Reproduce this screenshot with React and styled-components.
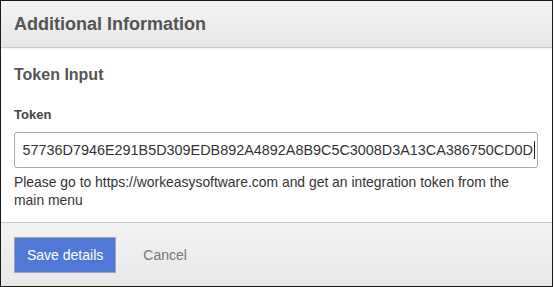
import styled, { createGlobalStyle } from "styled-components";

const GlobalStyle = createGlobalStyle`
  html, body {
    margin: 0;
    padding: 0;
    background: #ffffff;
  }
  body {
    font-family: "Liberation Sans", Arial, sans-serif;
  }
`;

const Modal = styled.div`
  width: 553px;
  height: 287px;
  box-sizing: border-box;
  border: 1px solid #1c1c1c;
  display: flex;
  flex-direction: column;
  background: #ffffff;
`;

const Header = styled.div`
  height: 47px;
  flex-shrink: 0;
  box-sizing: border-box;
  display: flex;
  align-items: center;
  padding: 0 13px;
  background: linear-gradient(#f4f4f4, #e7e7e7);
  border-bottom: 1px solid #c9c9c9;
  box-shadow: 0 1px 2px rgba(0, 0, 0, 0.06);
`;

const Title = styled.h2`
  margin: 0;
  font-size: 18px;
  font-weight: bold;
  color: #555555;
`;

const Body = styled.div`
  flex: 1;
  padding: 18px 13px 0;
  display: flex;
  flex-direction: column;
`;

const Section = styled.h3`
  margin: 0 0 23px;
  font-size: 16px;
  font-weight: bold;
  color: #555555;
  line-height: 18px;
`;

const Label = styled.label`
  font-size: 13px;
  font-weight: bold;
  color: #444444;
  line-height: 16px;
  margin-bottom: 9px;
`;

const Field = styled.div`
  height: 36px;
  width: 524px;
  box-sizing: border-box;
  border: 1px solid #a9a9a9;
  border-radius: 3px;
  display: flex;
  align-items: center;
  justify-content: flex-end;
  overflow: hidden;
  padding: 0 2px;
  font-size: 14.4px;
  color: #333333;
  white-space: nowrap;
`;

const Caret = styled.span`
  display: inline-block;
  width: 1px;
  height: 18px;
  background: #222222;
  margin-left: 1px;
  flex-shrink: 0;
`;

const Help = styled.p`
  margin: 5px 0 0;
  font-size: 13.9px;
  line-height: 18px;
  color: #333333;
  width: 524px;
`;

const Footer = styled.div`
  height: 64px;
  flex-shrink: 0;
  box-sizing: border-box;
  border-top: 1px solid #c9c9c9;
  background: linear-gradient(#f3f3f3, #e8e8e8);
  display: flex;
  align-items: center;
  padding: 0 13px;
  gap: 14px;
`;

const Button = styled.button`
  height: 36px;
  padding: 0 12px;
  font-family: inherit;
  font-size: 14px;
  border: 1px solid ${(p) => (p.$primary ? "#9aa6bf" : "transparent")};
  background: ${(p) => (p.$primary ? "#5079d7" : "transparent")};
  color: ${(p) => (p.$primary ? "#ffffff" : "#777777")};
  cursor: pointer;
`;

export default function App() {
  return (
    <>
      <GlobalStyle />
      <Modal>
        <Header>
          <Title>Additional Information</Title>
        </Header>
        <Body>
          <Section>Token Input</Section>
          <Label>Token</Label>
          <Field>
            <span>57736D7946E291B5D309EDB892A4892A8B9C5C3008D3A13CA386750CD0D</span>
            <Caret />
          </Field>
          <Help>
            Please go to https://workeasysoftware.com and get an integration
            token from the main menu
          </Help>
        </Body>
        <Footer>
          <Button $primary>Save details</Button>
          <Button>Cancel</Button>
        </Footer>
      </Modal>
    </>
  );
}
